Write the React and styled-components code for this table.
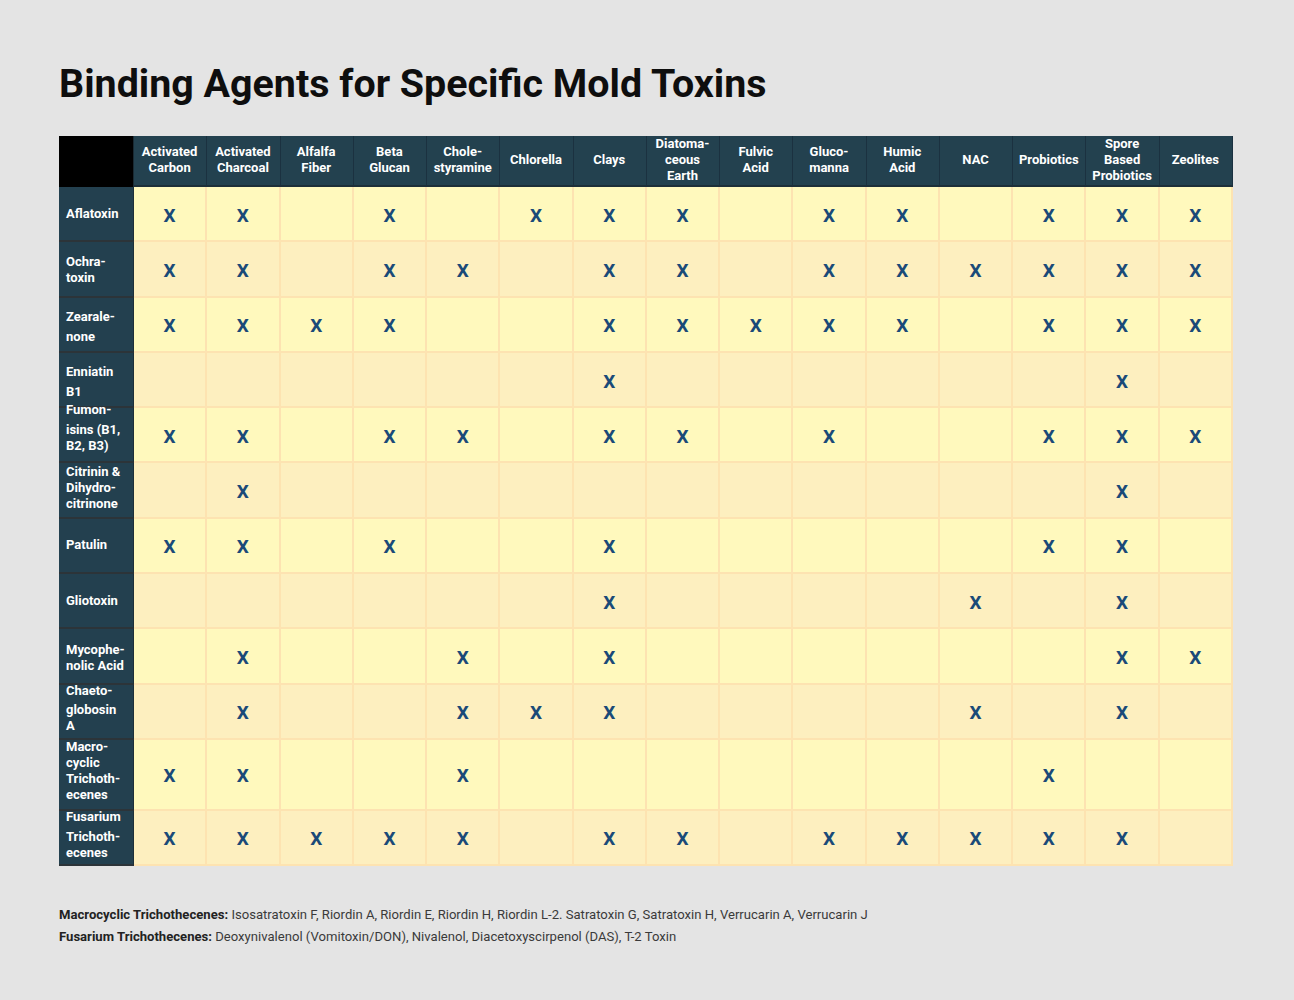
import React from "react";
import styled, { createGlobalStyle } from "styled-components";

const Global = createGlobalStyle`
  html, body { margin: 0; padding: 0; background: #e4e4e4; }
  body { font-family: Roboto, "Liberation Sans", Arial, sans-serif; }
`;

const Page = styled.div`
  width: 1294px;
  min-height: 1000px;
  box-sizing: border-box;
  padding: 58px 61px 0 59px;
  background: #e4e4e4;
`;

const Title = styled.h1`
  margin: 0 0 26px;
  font-size: 39.4px;
  line-height: 52px;
  font-weight: 700;
  color: #0e0e0e;
  letter-spacing: 0;
`;

const Grid = styled.div`
  display: grid;
  width: 1174px;
  grid-template-columns: 75px repeat(15, 1fr);
  grid-template-rows: 51px repeat(10, 55.3px) 71px 55px;
`;

const Corner = styled.div`
  background: #000;
  border-right: 1px solid #1a2a33;
`;

const HeadCell = styled.div`
  background: #23414f;
  color: #fff;
  font-weight: 700;
  font-size: 13px;
  line-height: 16px;
  display: flex;
  align-items: center;
  justify-content: center;
  text-align: center;
  white-space: pre-line;
  padding: 0 1px 1px 0;
  border-right: 1px solid #1b3140;
  border-bottom: 2px solid #1d2f39;
`;

const Label = styled.div`
  background: #23404f;
  color: #fff;
  font-weight: 700;
  font-size: 13px;
  line-height: 16px;
  display: flex;
  flex-direction: column;
  justify-content: ${(p) => (p.$top ? "flex-start" : "center")};
  padding: 0 4px 0 7px;
  border-bottom: 2px solid #2c3439;
  border-right: 1px solid #1d2f39;
  overflow: visible;
`;

const Line = styled.span`
  display: block;
  margin-top: ${(p) => p.$gap}px;
`;

const Cell = styled.div`
  background: ${(p) => (p.$alt ? "#fdefbf" : "#fff9bd")};
  border-right: 2px solid #fde3b1;
  border-bottom: 2px solid #fde3b1;
  padding-top: 3px;
  display: flex;
  align-items: center;
  justify-content: center;
  color: #1a4a78;
  font-weight: 700;
  font-size: 19px;
`;

const Notes = styled.div`
  margin-top: 40px;
  display: flex;
  flex-direction: column;
  gap: 5px;
  font-size: 13.1px;
  line-height: 17px;
  color: #3a3a3a;
`;

const NoteLabel = styled.strong`
  font-weight: 700;
  color: #222;
`;

const cols = [
  "Activated\nCarbon",
  "Activated\nCharcoal",
  "Alfalfa\nFiber",
  "Beta\nGlucan",
  "Chole-\nstyramine",
  "Chlorella",
  "Clays",
  "Diatoma-\nceous\nEarth",
  "Fulvic\nAcid",
  "Gluco-\nmanna",
  "Humic\nAcid",
  "NAC",
  "Probiotics",
  "Spore\nBased\nProbiotics",
  "Zeolites",
];

const rows = [
  { lines: ["Aflatoxin"], x: [0, 1, 3, 5, 6, 7, 9, 10, 12, 13, 14] },
  { lines: ["Ochra-", "toxin"], top: 12, x: [0, 1, 3, 4, 6, 7, 9, 10, 11, 12, 13, 14] },
  { lines: ["Zearale-", "none"], top: 11, gap: 4, x: [0, 1, 2, 3, 6, 7, 8, 9, 10, 12, 13, 14] },
  { lines: ["Enniatin", "B1"], top: 11, gap: 4, x: [6, 13] },
  { lines: ["Fumon-", "isins (B1,", "B2, B3)"], top: -6, gap: 4, x: [0, 1, 3, 4, 6, 7, 9, 12, 13, 14] },
  { lines: ["Citrinin &", "Dihydro-", "citrinone"], top: 1, x: [1, 13] },
  { lines: ["Patulin"], x: [0, 1, 3, 6, 12, 13] },
  { lines: ["Gliotoxin"], x: [6, 11, 13] },
  { lines: ["Mycophe-", "nolic Acid"], top: 13, x: [1, 4, 6, 13, 14] },
  { lines: ["Chaeto-", "globosin", "A"], top: -2, gap: 3, x: [1, 4, 5, 6, 11, 13] },
  { lines: ["Macro-", "cyclic", "Trichoth-", "ecenes"], top: -1, x: [0, 1, 4, 12] },
  { lines: ["Fusarium", "Trichoth-", "ecenes"], top: -2, gap: 4, x: [0, 1, 2, 3, 4, 6, 7, 9, 10, 11, 12, 13] },
];

export default function App() {
  return (
    <Page>
      <Global />
      <Title>Binding Agents for Specific Mold Toxins</Title>
      <Grid>
        <Corner />
        {cols.map((c) => (
          <HeadCell key={c}>{c}</HeadCell>
        ))}
        {rows.map((r, ri) => (
          <React.Fragment key={ri}>
            <Label $top={r.top !== undefined}>
              {r.lines.map((l, li) => (
                <Line
                  key={li}
                  $gap={li === 0 ? r.top || 0 : li === 1 ? r.gap || 0 : 0}
                >
                  {l}
                </Line>
              ))}
            </Label>
            {cols.map((c, ci) => (
              <Cell key={ci} $alt={ri % 2 === 1}>
                {r.x.includes(ci) ? "X" : ""}
              </Cell>
            ))}
          </React.Fragment>
        ))}
      </Grid>
      <Notes>
        <div>
          <NoteLabel>Macrocyclic Trichothecenes:</NoteLabel> Isosatratoxin F, Riordin A, Riordin E,
          Riordin H, Riordin L-2. Satratoxin G, Satratoxin H, Verrucarin A, Verrucarin J
        </div>
        <div>
          <NoteLabel>Fusarium Trichothecenes:</NoteLabel> Deoxynivalenol (Vomitoxin/DON), Nivalenol,
          Diacetoxyscirpenol (DAS), T-2 Toxin
        </div>
      </Notes>
    </Page>
  );
}
